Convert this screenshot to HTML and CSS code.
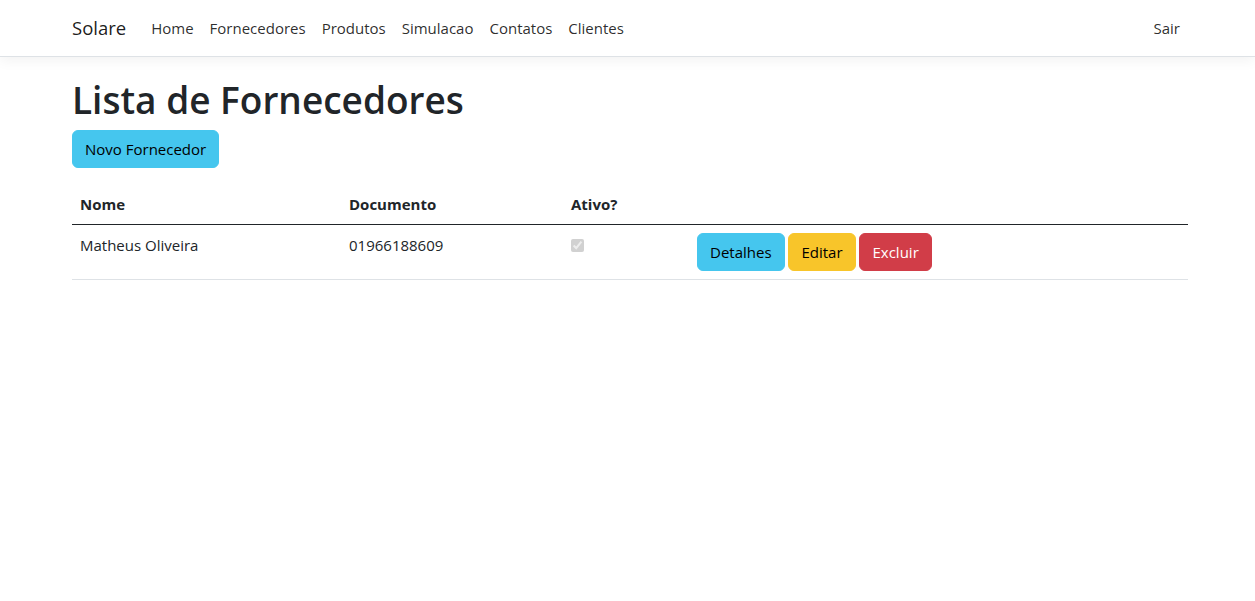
FILE: index.html
```html
<!DOCTYPE html>
<html lang="pt-br">
<head>
<meta charset="utf-8">
<title>Lista de Fornecedores</title>
<link rel="stylesheet" href="styles.css">
</head>
<body>
<header class="navbar">
  <div class="nav-inner">
    <a class="brand" href="#">Solare</a>
    <ul class="nav-links">
      <li><a class="nav-link" href="#">Home</a></li>
      <li><a class="nav-link" href="#">Fornecedores</a></li>
      <li><a class="nav-link" href="#">Produtos</a></li>
      <li><a class="nav-link" href="#">Simulacao</a></li>
      <li><a class="nav-link" href="#">Contatos</a></li>
      <li><a class="nav-link" href="#">Clientes</a></li>
    </ul>
    <a class="nav-link" href="#">Sair</a>
  </div>
</header>
<main class="container">
  <h1 class="title">Lista de Fornecedores</h1>
  <p class="actions"><a class="btn btn-info" href="#">Novo Fornecedor</a></p>
  <table class="table">
    <thead>
      <tr>
        <th class="c1">Nome</th>
        <th class="c2">Documento</th>
        <th class="c3">Ativo?</th>
        <th class="c4"></th>
      </tr>
    </thead>
    <tbody>
      <tr>
        <td>Matheus Oliveira</td>
        <td>01966188609</td>
        <td><input class="check" type="checkbox" checked disabled></td>
        <td class="btns">
          <a class="btn btn-info" href="#">Detalhes</a>
          <a class="btn btn-warning" href="#">Editar</a>
          <a class="btn btn-danger" href="#">Excluir</a>
        </td>
      </tr>
    </tbody>
  </table>
</main>
</body>
</html>
```

FILE: styles.css
```css
* { box-sizing: border-box; }
html, body { margin: 0; padding: 0; }
body {
  font-family: "Open Sans", "Noto Sans", "Liberation Sans", sans-serif;
  font-size: 15px;
  line-height: 24px;
  color: #212529;
  background: #fff;
}
a { text-decoration: none; }

.navbar {
  border-bottom: 1px solid #dee2e6;
  box-shadow: 0 .25rem .75rem rgba(0,0,0,.05);
  padding: 8px 0;
  background: #fff;
  margin-bottom: 17px;
}
.nav-inner {
  width: 1116px;
  margin-left: 72px;
  display: flex;
  align-items: center;
}
.brand {
  font-size: 18.5px;
  color: rgba(0,0,0,.9);
  padding: 5px 0;
  margin-right: 17px;
  line-height: 30px;
}
.nav-links {
  list-style: none;
  margin: 0;
  padding: 0;
  display: flex;
  flex: 1;
}
.nav-link {
  display: block;
  padding: 8px;
  color: rgba(0,0,0,.84);
  font-size: 15px;
  line-height: 24px;
}

.container {
  width: 1116px;
  margin-left: 72px;
}
.title {
  font-size: 37px;
  font-weight: 600;
  line-height: 48px;
  padding-top: 2px;
  margin: 0 0 6px;
}
.actions { margin: 0 0 16px; }

.btn {
  display: inline-block;
  padding: 6px 12px;
  font-size: 15px;
  line-height: 24px;
  border: 1px solid transparent;
  border-radius: 6px;
  color: #000;
  vertical-align: middle;
}
.btn-info { background: #45c6ee; border-color: #45c6ee; }
.btn-warning { background: #f8c52a; border-color: #f8c52a; }
.btn-danger { background: #d13d48; border-color: #d13d48; color: #fff; }

.table {
  width: 100%;
  border-collapse: collapse;
}
.table th, .table td {
  padding: 8px;
  text-align: left;
  vertical-align: top;
  border-bottom: 1px solid #dee2e6;
}
.table th { font-weight: 700; border-bottom: 1px solid #212529; }
.c1 { width: 269px; }
.c2 { width: 222px; }
.c3 { width: 126px; }
.btns { white-space: nowrap; }
.check {
  margin: 6px 0 0;
  width: 13px;
  height: 13px;
}
```
